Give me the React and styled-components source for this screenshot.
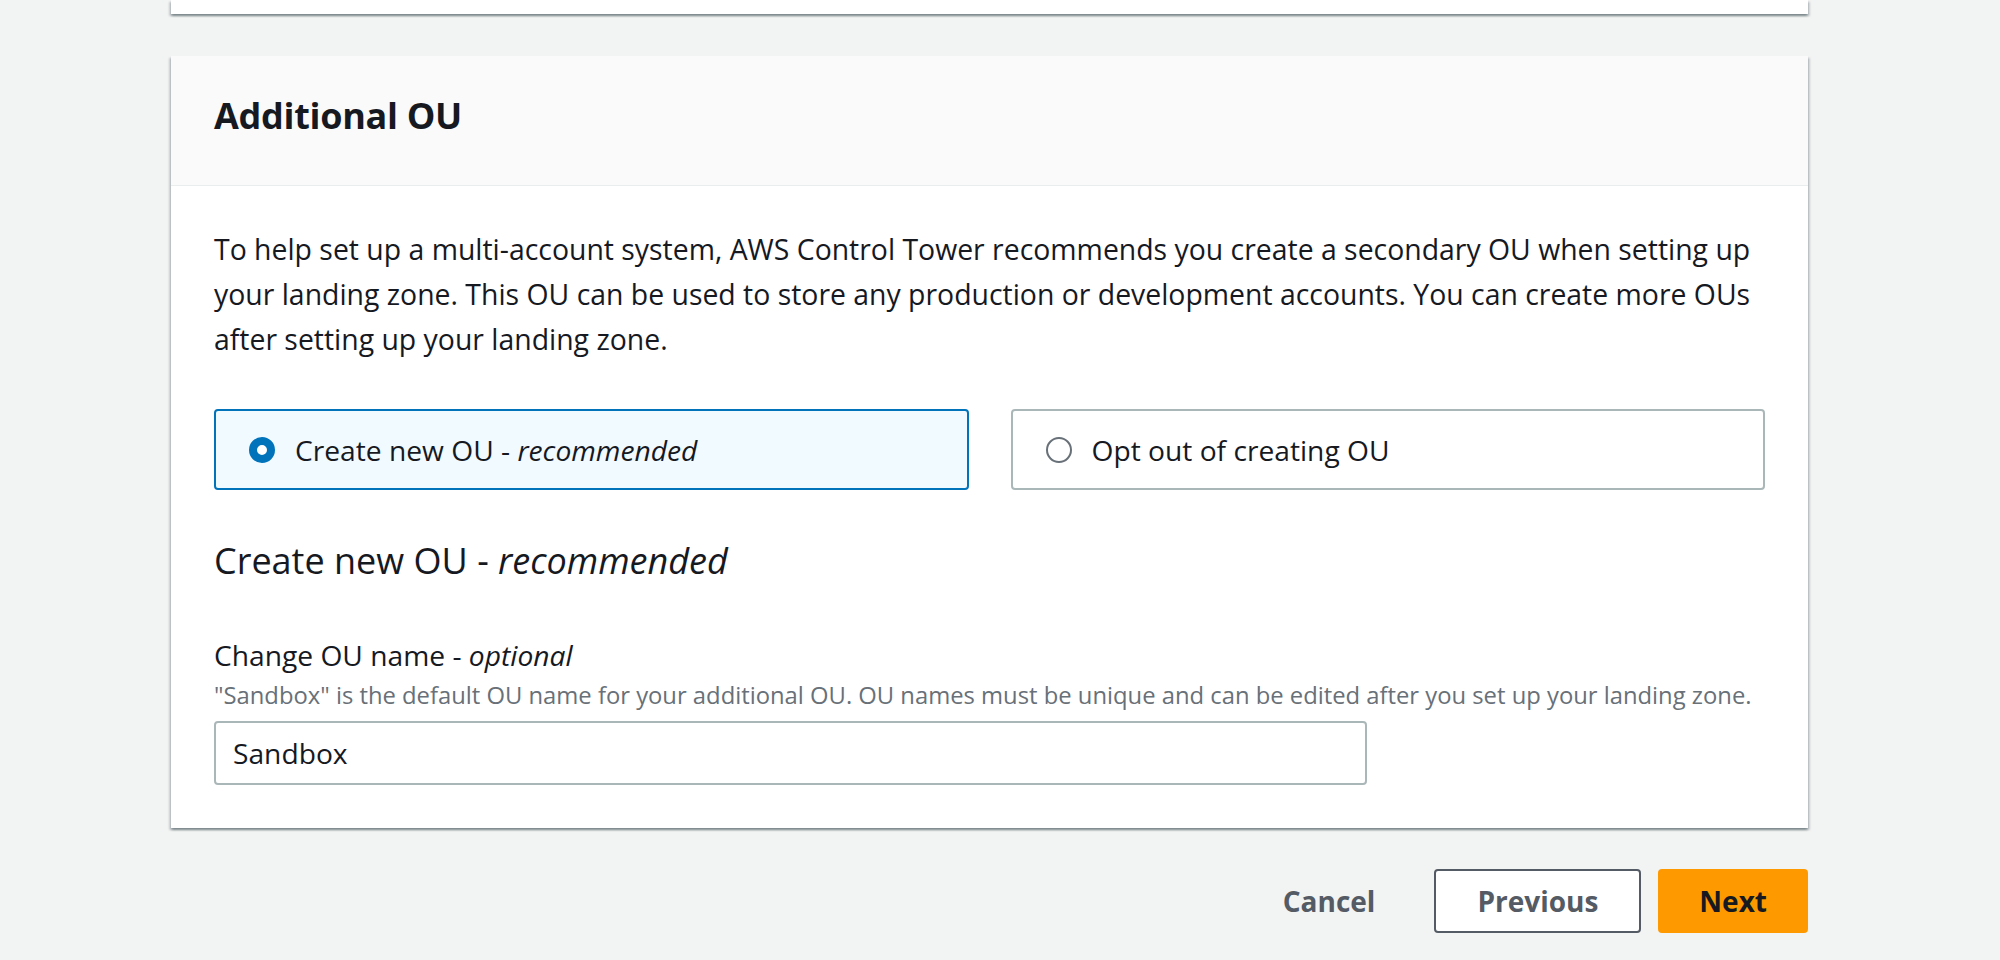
import React from 'react'
import styled, { createGlobalStyle } from 'styled-components';

const GlobalStyle = createGlobalStyle`
html, body {
  margin: 0;
  padding: 0;
  background: #f2f3f3;
  font-family: "Open Sans", "Noto Sans", sans-serif;
  color: #16191f;
}
`;

const StyledPage = styled.div`
width: 1637px;
margin-left: 171px;
display: flex;
flex-direction: column;
`;

const CutCard = styled.div`
height: 14px;
background: #fff;
box-shadow: 0 2px 2px 0 rgba(0, 28, 36, 0.3), 2px 2px 2px 0 rgba(0, 28, 36, 0.15), -2px 2px 2px 0 rgba(0, 28, 36, 0.15);
`;

const Card = styled.section`
margin-top: 42px;
background: #fff;
box-shadow: 0 2px 2px 0 rgba(0, 28, 36, 0.3), 2px 2px 2px 0 rgba(0, 28, 36, 0.15), -2px 2px 2px 0 rgba(0, 28, 36, 0.15);
`;

const CardHeader = styled.header`
display: flex;
align-items: center;
padding: 0 43px 10px 43px;
background: #fafafa;
border-bottom: 1px solid #eaeded;
box-sizing: border-box;
height: 130px;

h2 {
  margin: 0;
  font-size: 36px;
  font-weight: 700;
  letter-spacing: -0.3px;
}
`;

const CardBody = styled.div`
padding: 41px 43px 43px 43px;
display: flex;
flex-direction: column;
`;

const Intro = styled.p`
margin: 0;
font-size: 28.4px;
line-height: 45px;
`;

const Tiles = styled.div`
display: grid;
grid-template-columns: 1fr 1fr;
gap: 42px;
margin-top: 47px;
`;

const Tile = styled.label`
height: 81px;
box-sizing: border-box;
display: flex;
align-items: center;
gap: 20px;
padding: 0 33px;
border: 2px solid ${p => (p.$selected ? '#0073bb' : '#aab7b8')};
border-radius: 4px;
background: ${p => (p.$selected ? '#f1faff' : '#fff')};
font-size: 28.2px;
cursor: pointer;

em { font-style: italic; }
`;

const Radio = styled.span`
flex: none;
width: 26px;
height: 26px;
box-sizing: border-box;
border-radius: 50%;
border: ${p => (p.$checked ? '8px solid #0073bb' : '2px solid #687078')};
background: #fff;
`;

const SubHeading = styled.h3`
margin: 48px 0 0 0;
font-size: 36px;
line-height: 46px;
font-weight: 400;
`;

const Label = styled.div`
margin-top: 49px;
font-size: 28.2px;
line-height: 44px;
`;

const Hint = styled.div`
font-size: 23.8px;
line-height: 36px;
color: #687078;
`;

const Input = styled.input`
margin-top: 8px;
width: 1153px;
height: 64px;
box-sizing: border-box;
padding: 0 17px;
border: 2px solid #aab7b8;
border-radius: 4px;
font-family: inherit;
font-size: 28.2px;
color: #16191f;
background: #fff;
outline: none;
`;

const Footer = styled.div`
display: flex;
justify-content: flex-end;
align-items: center;
gap: 17px;
margin-top: 41px;
`;

const paddings = { link: '40px', normal: '41px', primary: '39px' };

const Button = styled.button`
height: 64px;
box-sizing: border-box;
padding: 0 ${p => paddings[p.$variant]};
border-radius: 4px;
font-family: inherit;
font-size: 28px;
font-weight: 700;
cursor: pointer;
border: 2px solid ${p => (p.$variant === 'normal' ? '#545b64' : p.$variant === 'primary' ? '#ff9900' : 'transparent')};
background: ${p => (p.$variant === 'primary' ? '#ff9900' : p.$variant === 'normal' ? '#fff' : 'transparent')};
color: ${p => (p.$variant === 'primary' ? '#16191f' : '#545b64')};
`;

const App = () => {
  return (
    <>
      <GlobalStyle />
      <StyledPage>
        <CutCard />
        <Card>
          <CardHeader>
            <h2>Additional OU</h2>
          </CardHeader>
          <CardBody>
            <Intro>
              To help set up a multi-account system, AWS Control Tower recommends you create a secondary OU when setting up
              your landing zone. This OU can be used to store any production or development accounts. You can create more OUs
              after setting up your landing zone.
            </Intro>

            <Tiles>
              <Tile $selected>
                <Radio $checked />
                <span>Create new OU - <em>recommended</em></span>
              </Tile>
              <Tile>
                <Radio />
                <span>Opt out of creating OU</span>
              </Tile>
            </Tiles>

            <SubHeading>Create new OU - <em>recommended</em></SubHeading>

            <Label>Change OU name - <em>optional</em></Label>
            <Hint>"Sandbox" is the default OU name for your additional OU. OU names must be unique and can be edited after you set up your landing zone.</Hint>
            <Input defaultValue="Sandbox" />
          </CardBody>
        </Card>

        <Footer>
          <Button $variant="link">Cancel</Button>
          <Button $variant="normal">Previous</Button>
          <Button $variant="primary">Next</Button>
        </Footer>
      </StyledPage>
    </>
  )
}

export default App
